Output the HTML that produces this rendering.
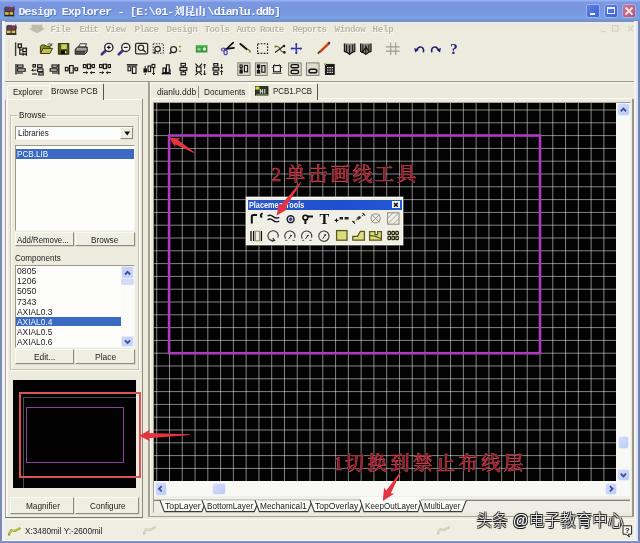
<!DOCTYPE html>
<html><head><meta charset="utf-8"><title>Design Explorer</title>
<style>
html,body{margin:0;padding:0;background:#ebeadd;}
#w{position:relative;width:640px;height:543px;overflow:hidden;background:#ebeadd;}
#w>*{filter:blur(0.45px);}
#w>.nb{filter:blur(0.22px);}
#w div,#w span,#w svg{position:absolute;}
#w div{box-sizing:border-box;}
.t{white-space:nowrap;}
.btn{background:#efeee3;border:1px solid;border-color:#fbfbf6 #8e8d80 #8e8d80 #fbfbf6;box-shadow:0.5px 0.5px 0 #c9c8ba;}
.sunk{background:#fdfdfb;border:1px solid;border-color:#9a998c #f6f6f0 #f6f6f0 #9a998c;}
</style></head><body><div id="w">
<div style="left:0.00px;top:0.00px;width:640.00px;height:21.60px;background:linear-gradient(to bottom,#9ab6f8 0,#8ea9ee 1.2px,#7996de 2.6px,#7896de 9px,#7a9ae2 14px,#76a0e5 16.5px,#76a0e5 19px,#7a90bc 20.2px,#7d92ba 21.6px);"></div>
<div style="left:0.00px;top:21.60px;width:640.00px;height:2.00px;background:#e6ecf1;"></div>
<div style="left:0.00px;top:23.60px;width:640.00px;height:14.40px;background:linear-gradient(to bottom,#ece9da,#eeecdf);"></div>
<div style="left:0.00px;top:21.00px;width:1.70px;height:522.00px;background:#7b8bb4;"></div>
<div style="left:1.70px;top:21.00px;width:3.30px;height:522.00px;background:#eef1fa;"></div>
<div style="left:637.80px;top:21.00px;width:2.20px;height:522.00px;background:#7484ae;"></div>
<div style="left:636.40px;top:21.00px;width:1.40px;height:520.00px;background:#dbe5f9;"></div>
<div style="left:634.00px;top:21.00px;width:2.40px;height:520.00px;background:#f5f3eb;"></div>
<div style="left:0.00px;top:541.00px;width:640.00px;height:2.00px;background:linear-gradient(to bottom,#8c9cd0,#7686be);"></div>
<div style="left:1.70px;top:539.80px;width:636.10px;height:1.20px;background:#f6f7fb;"></div>
<div style="left:585.60px;top:3.60px;width:14.40px;height:14.60px;background:linear-gradient(135deg,#5c80e2,#3f63d2);border-radius:2.5px;border:1px solid #9fb3ee;"><div style="left:3.2px;top:8.2px;width:5px;height:2.2px;background:#f4f6ff"></div></div>
<div style="left:603.70px;top:3.60px;width:13.90px;height:14.60px;background:linear-gradient(135deg,#5c80e2,#3f63d2);border-radius:2.5px;border:1px solid #9fb3ee;"><div style="left:2.6px;top:2.4px;width:7.6px;height:7.4px;border:1.2px solid #e8eeff;border-top-width:2.4px"></div></div>
<div style="left:621.90px;top:3.60px;width:14.10px;height:14.60px;background:linear-gradient(135deg,#cf7a90,#b8526e);border-radius:2.5px;border:1px solid #9fb3ee;"><svg width="12" height="12" style="left:0;top:0.2px" viewBox="0 0 12 12"><path d="M2.6 2.6 L9.4 9.6 M9.4 2.6 L2.6 9.6" stroke="#fbeef2" stroke-width="1.9" fill="none"/></svg></div>
<svg style="left:4px;top:6.2px" width="11" height="10.8" viewBox="0 0 11 11"><rect x="0.3" y="1.5" width="10" height="8.8" fill="#3a2e3a"/><rect x="1.2" y="0.6" width="4.6" height="4.8" fill="#5e3e66"/><rect x="5.6" y="1.2" width="3.8" height="4.2" fill="#7c3c3c"/><rect x="1" y="6.3" width="3.6" height="2.6" fill="#d8c038"/><rect x="5.6" y="6.3" width="3.6" height="2.6" fill="#d8c038"/><rect x="0.3" y="9.3" width="10" height="1.2" fill="#2a2420"/><path d="M9.6 0 L10.6 4.5" stroke="#3040a0" stroke-width="0.9"/></svg>
<svg style="left:5.5px;top:23.6px" width="11" height="11.6" viewBox="0 0 11 11"><rect x="0.3" y="1.5" width="10" height="8.8" fill="#3a2e3a"/><rect x="1.2" y="0.6" width="4.6" height="4.8" fill="#5e3e66"/><rect x="5.6" y="1.2" width="3.8" height="4.2" fill="#7c3c3c"/><rect x="1" y="6.3" width="3.6" height="2.6" fill="#d8c038"/><rect x="5.6" y="6.3" width="3.6" height="2.6" fill="#d8c038"/><rect x="0.3" y="9.3" width="10" height="1.2" fill="#2a2420"/><path d="M9.6 0 L10.6 4.5" stroke="#3040a0" stroke-width="0.9"/></svg>
<svg style="left:27px;top:23.5px" width="20" height="10" viewBox="0 0 20 10"><path d="M4.5 0.8 H15.5 V4.6 H18.6 L10 9.2 L1.4 4.6 H4.5 Z" fill="#bdbcae"/></svg>
<span class="t" style="left:18.40px;top:4.60px;font-family:'Liberation Mono','Noto Sans Mono CJK SC',monospace;font-size:11.6px;line-height:14px;font-weight:bold;color:#f3f6ff;letter-spacing:-0.751px;text-shadow:0.6px 0.6px 0.5px rgba(60,80,150,.55);">Design Explorer - [E:\01-</span>
<span class="t" style="left:174.2px;top:4.6px;font-family:'Liberation Mono','Noto Serif CJK SC',serif;font-size:10.4px;line-height:14px;font-weight:900;color:#fbfcff;letter-spacing:0.1px;text-shadow:0.6px 0.6px 0.5px rgba(60,80,150,.55);">刘昆山</span>
<span class="t" style="left:207.60px;top:4.60px;font-family:'Liberation Mono','Noto Sans Mono CJK SC',monospace;font-size:11.6px;line-height:14px;font-weight:bold;color:#fbfcff;letter-spacing:-0.911px;text-shadow:0.6px 0.6px 0.5px rgba(60,80,150,.55);">\dianlu.ddb]</span>
<span class="t" style="left:50.60px;top:22.60px;font-family:'Liberation Mono','Noto Sans Mono CJK SC',monospace;font-size:9.2px;line-height:14px;font-weight:bold;color:#b9b8ab;letter-spacing:-0.571px;text-shadow:0.7px 0.7px 0 #fbfbf6;">File</span>
<span class="t" style="left:79.60px;top:22.60px;font-family:'Liberation Mono','Noto Sans Mono CJK SC',monospace;font-size:9.2px;line-height:14px;font-weight:bold;color:#b9b8ab;letter-spacing:-0.946px;text-shadow:0.7px 0.7px 0 #fbfbf6;">Edit</span>
<span class="t" style="left:105.60px;top:22.60px;font-family:'Liberation Mono','Noto Sans Mono CJK SC',monospace;font-size:9.2px;line-height:14px;font-weight:bold;color:#b9b8ab;letter-spacing:-0.571px;text-shadow:0.7px 0.7px 0 #fbfbf6;">View</span>
<span class="t" style="left:134.60px;top:22.60px;font-family:'Liberation Mono','Noto Sans Mono CJK SC',monospace;font-size:9.2px;line-height:14px;font-weight:bold;color:#b9b8ab;letter-spacing:-0.761px;text-shadow:0.7px 0.7px 0 #fbfbf6;">Place</span>
<span class="t" style="left:166.60px;top:22.60px;font-family:'Liberation Mono','Noto Sans Mono CJK SC',monospace;font-size:9.2px;line-height:14px;font-weight:bold;color:#b9b8ab;letter-spacing:-0.388px;text-shadow:0.7px 0.7px 0 #fbfbf6;">Design</span>
<span class="t" style="left:204.60px;top:22.60px;font-family:'Liberation Mono','Noto Sans Mono CJK SC',monospace;font-size:9.2px;line-height:14px;font-weight:bold;color:#b9b8ab;letter-spacing:-0.561px;text-shadow:0.7px 0.7px 0 #fbfbf6;">Tools</span>
<span class="t" style="left:236.60px;top:22.60px;font-family:'Liberation Mono','Noto Sans Mono CJK SC',monospace;font-size:9.2px;line-height:14px;font-weight:bold;color:#b9b8ab;letter-spacing:-0.841px;text-shadow:0.7px 0.7px 0 #fbfbf6;">Auto Route</span>
<span class="t" style="left:292.60px;top:22.60px;font-family:'Liberation Mono','Noto Sans Mono CJK SC',monospace;font-size:9.2px;line-height:14px;font-weight:bold;color:#b9b8ab;letter-spacing:-0.692px;text-shadow:0.7px 0.7px 0 #fbfbf6;">Reports</span>
<span class="t" style="left:334.60px;top:22.60px;font-family:'Liberation Mono','Noto Sans Mono CJK SC',monospace;font-size:9.2px;line-height:14px;font-weight:bold;color:#b9b8ab;letter-spacing:-0.388px;text-shadow:0.7px 0.7px 0 #fbfbf6;">Window</span>
<span class="t" style="left:372.60px;top:22.60px;font-family:'Liberation Mono','Noto Sans Mono CJK SC',monospace;font-size:9.2px;line-height:14px;font-weight:bold;color:#b9b8ab;letter-spacing:-0.321px;text-shadow:0.7px 0.7px 0 #fbfbf6;">Help</span>
<svg style="left:598px;top:23px" width="38" height="12" viewBox="0 0 38 12"><g stroke="#d4d3c7" stroke-width="1.2" fill="none"><path d="M3 8.6 H8"/><rect x="14.5" y="2.6" width="5.5" height="5.5"/><path d="M30 2.6 L35 8.4 M35 2.6 L30 8.4"/></g></svg>
<div style="left:5.00px;top:38.00px;width:629.00px;height:43.00px;background:#ecebde;"></div>
<div style="left:5.00px;top:80.80px;width:629.00px;height:1.50px;background:#98978a;"></div>
<div style="left:5.00px;top:82.20px;width:629.00px;height:1.00px;background:#f8f8f2;"></div>
<div style="left:7.50px;top:40.00px;width:1.10px;height:18.00px;background:#e0dfd2;"></div>
<div style="left:7.50px;top:61.50px;width:1.10px;height:17.00px;background:#e0dfd2;"></div>
<svg style="left:0;top:0" width="640" height="100" viewBox="0 0 640 100"><path d="M15.6 42.4 V56" stroke="#3a3a3a" stroke-width="1.4" fill="none"/><rect x="18.2" y="44" width="3.2" height="3.6" fill="none" stroke="#1a1a1a" stroke-width="1.3"/><path d="M19.8 47.8 V54.2 H22.6 M19.8 50 H22.6" stroke="#1a1a1a" stroke-width="1.2" fill="none"/><rect x="22.9" y="48.2" width="3.5" height="3.4" fill="none" stroke="#1a1a1a" stroke-width="1.3"/><path d="M23 52.6 V55.8 M26.4 52.6 V55.8 M23 54.2 H26.4" stroke="#1a1a1a" stroke-width="1.2"/><path d="M40.4 53.4 V46.4 L41.6 45 H45 L46 46.2 H50 V48" fill="#8e8e28" stroke="#3c3c10" stroke-width="1"/><path d="M40.6 53.5 L43 48.4 H52.6 L49.8 53.5 Z" fill="#c2c34a" stroke="#3c3c10" stroke-width="1"/><path d="M47.6 44.2 Q50 42.8 51.6 45 M51.8 43.4 V45.4 H49.8" fill="none" stroke="#3c3c10" stroke-width="0.9"/><rect x="58.4" y="43.6" width="10.4" height="10.6" fill="#5a5c14" stroke="#2e2e0a" stroke-width="1"/><rect x="61.2" y="44.2" width="5.6" height="4.8" fill="#c6cf62"/><rect x="60.8" y="50.4" width="5.6" height="3.8" fill="#0c0c0c"/><rect x="65" y="51" width="1.2" height="2.4" fill="#d8d8c8"/><path d="M78.4 47.2 L80.2 43.8 H86.6 L85 47.2 Z" fill="#f4f4ee" stroke="#222" stroke-width="0.9"/><path d="M75.2 49.2 L77.6 47 H87.2 V51.6 L85 54.2 H75.2 Z" fill="#7c7c74" stroke="#1c1c1c" stroke-width="1"/><path d="M75.4 51.6 H85 M76 53 H84.6" stroke="#1c1c1c" stroke-width="0.8"/><path d="M77 49 H86.4" stroke="#d0d0c8" stroke-width="0.9"/><path d="M106.1 50.3 L101.8 54.2" stroke="#45308c" stroke-width="2.7" stroke-linecap="round"/><circle cx="108.8" cy="47.4" r="4.1" fill="#f4f3ec" stroke="#262630" stroke-width="1.35"/><path d="M106.89999999999999 47.4 H110.7 M108.8 45.5 V49.3" stroke="#111" stroke-width="1.1"/><path d="M123.1 50.3 L118.8 54.2" stroke="#45308c" stroke-width="2.7" stroke-linecap="round"/><circle cx="125.8" cy="47.4" r="4.1" fill="#f4f3ec" stroke="#262630" stroke-width="1.35"/><path d="M123.89999999999999 47.4 H127.7" stroke="#111" stroke-width="1.1"/><rect x="135.6" y="43.4" width="12" height="10.4" rx="1.2" fill="#f1f0e6" stroke="#2a2a2a" stroke-width="1.3"/><circle cx="141" cy="47.8" r="2.7" fill="none" stroke="#2a2a2a" stroke-width="1.2"/><path d="M143 49.8 L145.8 52.2" stroke="#2a2a2a" stroke-width="1.5"/><rect x="153.2" y="43.8" width="10.2" height="9.4" fill="none" stroke="#333" stroke-width="1" stroke-dasharray="1.4 1.3"/><circle cx="157.6" cy="49" r="2.7" fill="#f1f0e6" stroke="#2a2a2a" stroke-width="1.2"/><path d="M155.8 51 L153.6 53.4" stroke="#2a2a2a" stroke-width="1.5"/><circle cx="173.6" cy="49.6" r="3" fill="#f1f0e6" stroke="#2a2a2a" stroke-width="1.3"/><path d="M171.4 52 L169.6 53.8" stroke="#2a2a2a" stroke-width="1.6"/><rect x="179" y="45.8" width="2" height="1.6" fill="#8c8c20"/><rect x="179" y="50.4" width="2" height="1.6" fill="#8c8c20"/><rect x="195.8" y="45.3" width="11.6" height="7.2" fill="#2f9a33"/><rect x="195.8" y="45.3" width="11.6" height="1.2" fill="#5cc060"/><circle cx="204.4" cy="49" r="1.8" fill="#d6ecd2"/><path d="M198 47.6 V50.8 M200 47.6 V50.8 M198 49.2 H200" stroke="#d6ecd2" stroke-width="0.8"/><path d="M233.2 42.6 L225.4 50 M234 47.8 L224.6 49.2" stroke="#111" stroke-width="1.7" stroke-linecap="round"/><ellipse cx="223.4" cy="49.6" rx="2" ry="1.5" fill="none" stroke="#5a50b8" stroke-width="1.3"/><ellipse cx="225.6" cy="52.4" rx="1.6" ry="2.2" fill="none" stroke="#5a50b8" stroke-width="1.3"/><path d="M240.4 44 L246.8 49.2" stroke="#111" stroke-width="2" stroke-linecap="round"/><path d="M246.8 49.2 L249.6 50.4 L250.2 52.6" stroke="#77771c" stroke-width="1.4" fill="none"/><rect x="257.6" y="43.8" width="10" height="9.6" fill="none" stroke="#222" stroke-width="1.1" stroke-dasharray="1.8 1.3"/><path d="M274.6 46.8 Q278 45 280 49 T285 52" stroke="#6e6e18" stroke-width="1.2" fill="none"/><path d="M275 52.6 L284.4 45.6" stroke="#222" stroke-width="1.2"/><circle cx="284" cy="46" r="1.3" fill="#222"/><circle cx="284.4" cy="52.4" r="1.3" fill="#222"/><circle cx="275.6" cy="46.6" r="1" fill="#6e6e18"/><path d="M291 48.6 H301.6 M296.3 43.4 V53.8" stroke="#3434b0" stroke-width="1.5"/><path d="M296.3 42.8 L294.9 44.8 H297.7 Z M296.3 54.4 L294.9 52.4 H297.7 Z M290.4 48.6 L292.4 47.2 V50 Z M302.2 48.6 L300.2 47.2 V50 Z" fill="#3434b0"/><path d="M329.4 42.8 L319.6 52" stroke="#c8402c" stroke-width="2.6"/><path d="M328.2 42.2 L319 50.8" stroke="#e8c84a" stroke-width="1"/><path d="M320 51.4 L317.8 53.6" stroke="#4a3a20" stroke-width="1.6"/><path d="M329.8 42.2 L328.4 43.6" stroke="#6a2a5a" stroke-width="2.2"/><path d="M344.4 43.4 V51.4 Q347.0 52 349.59999999999997 54.4 Q352.2 52 354.79999999999995 51.4 V43.4" fill="#8a8a84" stroke="#151515" stroke-width="1.2"/><path d="M346.59999999999997 44.6 V51.6 M349.59999999999997 45.2 V54 M352.59999999999997 44.6 V51.6" stroke="#151515" stroke-width="1"/><path d="M360.6 43.4 V51.4 Q363.20000000000005 52 365.8 54.4 Q368.40000000000003 52 371.0 51.4 V43.4" fill="#8a8a84" stroke="#151515" stroke-width="1.2"/><path d="M362.8 44.6 V51.6 M365.8 45.2 V54 M368.8 44.6 V51.6" stroke="#151515" stroke-width="1"/><path d="M361.6 52.8 L366 47.4 L368.6 50.8" stroke="#151515" stroke-width="1.3" fill="none"/><path d="M390.7 42.6 V55 M395.7 42.6 V55 M385.8 46.9 H399.6 M385.8 51.1 H399.6" stroke="#9c9c92" stroke-width="1.1"/><path d="M416.4 50.4 Q418.4 46 422 47.4 Q424.2 48.6 423.4 52.4" stroke="#20206a" stroke-width="1.5" fill="none"/><path d="M414.2 48 L418.8 49.8 L415.2 52.6 Z" fill="#20206a"/><path d="M438.8 50.4 Q436.8 46 433.2 47.4 Q431 48.6 431.8 52.4" stroke="#20206a" stroke-width="1.5" fill="none"/><path d="M441 48 L436.4 49.8 L440 52.6 Z" fill="#20206a"/><text x="450" y="54.4" font-family="Liberation Serif,serif" font-weight="bold" font-size="15.5" fill="#1c1c7c">?</text><path d="M16 64 V74.4" stroke="#141414" stroke-width="1.3" fill="none"/><rect x="17.6" y="65" width="5.4" height="2.2" fill="none" stroke="#141414" stroke-width="1.12"/><rect x="17.6" y="68.8" width="7.6" height="2.4" fill="none" stroke="#141414" stroke-width="1.12"/><path d="M17 73 H23" stroke="#141414" stroke-width="1.12" fill="none"/><rect x="33" y="64.6" width="2.4" height="2.4" fill="none" stroke="#141414" stroke-width="1.12"/><rect x="37.6" y="64.8" width="4.4" height="2.6" fill="none" stroke="#141414" stroke-width="1.12"/><rect x="37.6" y="69" width="5.4" height="2.6" fill="none" stroke="#141414" stroke-width="1.12"/><rect x="38.8" y="72.8" width="4.4" height="2.2" fill="none" stroke="#141414" stroke-width="1.12"/><path d="M32 70.2 H36.6 M33.2 68.8 L31.8 70.2 L33.2 71.6" stroke="#141414" stroke-width="1" fill="none"/><path d="M32 74 H37" stroke="#141414" stroke-width="1.12" fill="none"/><path d="M58.8 64 V74.4" stroke="#141414" stroke-width="1.3" fill="none"/><rect x="52" y="65" width="5.2" height="2.2" fill="none" stroke="#141414" stroke-width="1.12"/><rect x="50.2" y="68.8" width="7" height="2.4" fill="none" stroke="#141414" stroke-width="1.12"/><path d="M52 73 H58" stroke="#141414" stroke-width="1.12" fill="none"/><rect x="65.4" y="67.4" width="2.6" height="3.4" fill="none" stroke="#141414" stroke-width="1.12"/><rect x="69.6" y="65.6" width="3.6" height="7.4" fill="none" stroke="#141414" stroke-width="1.12"/><rect x="75" y="67.8" width="2.6" height="2.8" fill="none" stroke="#141414" stroke-width="1.12"/><path d="M68 69 H69.6 M73.4 69 H75" stroke="#141414" stroke-width="1.12" fill="none"/><rect x="83.4" y="64.6" width="2.6" height="3" fill="none" stroke="#141414" stroke-width="1.12"/><rect x="87.4" y="64.2" width="3" height="4.4" fill="none" stroke="#141414" stroke-width="1.12"/><rect x="92" y="64.6" width="2.4" height="3" fill="none" stroke="#141414" stroke-width="1.12"/><path d="M83 72.6 H87.4 M90.4 72.6 H95 M86.2 71.4 L87.6 72.6 L86.2 73.8 M91.8 71.4 L90.4 72.6 L91.8 73.8" stroke="#141414" stroke-width="1" fill="none"/><path d="M86.2 66 H87.4 M90.6 66 H92" stroke="#141414" stroke-width="1.12" fill="none"/><rect x="99.6" y="64.6" width="2.6" height="3" fill="none" stroke="#141414" stroke-width="1.12"/><rect x="103.4" y="64.2" width="3" height="4.4" fill="none" stroke="#141414" stroke-width="1.12"/><rect x="108" y="64.6" width="2.4" height="3" fill="none" stroke="#141414" stroke-width="1.12"/><path d="M99.4 72.6 H103.6 M106.4 72.6 H111 M102.2 71.4 L103.6 72.6 L102.2 73.8 M107.8 71.4 L106.4 72.6 L107.8 73.8" stroke="#141414" stroke-width="1" fill="none"/><path d="M126.8 64.9 H137.4" stroke="#141414" stroke-width="1.5" fill="none"/><rect x="128" y="66.8" width="2.8" height="4" fill="none" stroke="#141414" stroke-width="1.12"/><rect x="132.4" y="66.8" width="3.6" height="6.6" fill="none" stroke="#141414" stroke-width="1.12"/><rect x="144" y="69" width="2.4" height="3" fill="#1a1a1a" stroke="#141414" stroke-width="1.12"/><rect x="148" y="66" width="2.6" height="5.6" fill="none" stroke="#141414" stroke-width="1.12"/><rect x="152" y="64.4" width="2.8" height="3.2" fill="none" stroke="#141414" stroke-width="1.12"/><path d="M145.2 73.6 V75 M153.6 68 V74.4 M152.4 73 L153.6 74.6 L154.8 73 M145.2 66 V69" stroke="#141414" stroke-width="1" fill="none"/><path d="M161.6 73.6 H171" stroke="#141414" stroke-width="1.5" fill="none"/><rect x="163" y="68" width="2.6" height="4.6" fill="none" stroke="#141414" stroke-width="1.12"/><rect x="166.4" y="64.8" width="2.8" height="7.8" fill="none" stroke="#141414" stroke-width="1.12"/><path d="M170 69 V72.4" stroke="#141414" stroke-width="1.12" fill="none"/><rect x="181" y="63.4" width="4.4" height="2.6" fill="none" stroke="#141414" stroke-width="1.12"/><rect x="180" y="67.6" width="6.8" height="2.8" fill="none" stroke="#141414" stroke-width="1.12"/><rect x="181" y="72" width="4.6" height="2.8" fill="none" stroke="#141414" stroke-width="1.12"/><path d="M183.4 66 V67.6 M183.4 70.4 V72" stroke="#141414" stroke-width="1.12" fill="none"/><path d="M195.4 63.6 L198.2 66.6 M202 63.6 L199.4 66.6 M195.4 75.2 L198.2 72.4 M202 75.2 L199.4 72.4" stroke="#141414" stroke-width="1.12" fill="none"/><rect x="196.4" y="67" width="4.6" height="4.8" fill="none" stroke="#141414" stroke-width="1.12"/><path d="M204.6 64 V68.6 M204.6 70.4 V75 M203.4 65.4 L204.6 64 L205.8 65.4 M203.4 73.6 L204.6 75 L205.8 73.6" stroke="#141414" stroke-width="1" fill="none"/><rect x="213.8" y="63.6" width="4" height="2.4" fill="none" stroke="#141414" stroke-width="1.12"/><rect x="213" y="67.6" width="5.8" height="2.6" fill="none" stroke="#141414" stroke-width="1.12"/><rect x="213.8" y="72" width="4.2" height="2.6" fill="none" stroke="#141414" stroke-width="1.12"/><path d="M221.6 64 V68.6 M221.6 70.4 V75 M220.4 67.2 L221.6 68.6 L222.8 67.2 M220.4 71.8 L221.6 70.4 L222.8 71.8" stroke="#141414" stroke-width="1" fill="none"/><rect x="237.8" y="62.9" width="12.199999999999989" height="12.5" fill="#dddccf" stroke="#77766a" stroke-width="0.9"/><rect x="240" y="65" width="2.2" height="2.4" fill="none" stroke="#141414" stroke-width="1.12"/><rect x="240" y="70.6" width="2.2" height="2.4" fill="#1a1a1a" stroke="#141414" stroke-width="1.12"/><rect x="244.4" y="65.4" width="3.2" height="6.4" fill="none" stroke="#141414" stroke-width="1.12"/><path d="M239.6 69 H243 M241 67.6 V70.4" stroke="#141414" stroke-width="0.9" fill="none"/><rect x="255.4" y="62.9" width="11.799999999999983" height="12.5" fill="#dddccf" stroke="#77766a" stroke-width="0.9"/><rect x="257.4" y="65" width="2.2" height="2.6" fill="#1a1a1a" stroke="#141414" stroke-width="1.12"/><rect x="257.4" y="70.4" width="2.2" height="2.6" fill="#1a1a1a" stroke="#141414" stroke-width="1.12"/><rect x="261.8" y="65.6" width="3.2" height="6.6" fill="none" stroke="#141414" stroke-width="1.12"/><path d="M258.6 67.6 V70.4" stroke="#141414" stroke-width="0.9" fill="none"/><rect x="273.6" y="65.6" width="6.8" height="6.2" fill="#f6f6f0" stroke="#141414" stroke-width="1.12"/><path d="M271.8 67.4 H273.6 M280.4 67.4 H282.4 M274.6 64 V65.6 M279.4 64 V65.6 M272.4 73.4 H282" stroke="#555" stroke-width="1" fill="none"/><rect x="288.6" y="62.9" width="12.599999999999966" height="12.5" fill="#dddccf" stroke="#77766a" stroke-width="0.9"/><rect x="291" y="64.6" width="7.6" height="3.2" rx="1.6" fill="none" stroke="#151515" stroke-width="1.4"/><rect x="291" y="70.2" width="7.6" height="3.4" rx="1.7" fill="none" stroke="#151515" stroke-width="1.4"/><rect x="306.4" y="62.9" width="12.600000000000023" height="12.5" fill="#dddccf" stroke="#77766a" stroke-width="0.9"/><rect x="309" y="69.2" width="7.8" height="3.6" rx="1.8" fill="none" stroke="#151515" stroke-width="1.5"/><rect x="325.4" y="64.4" width="8.8" height="10" fill="#1a1a1a" stroke="#1a1a1a" stroke-width="1"/><path d="M327 67.6 H333 M327 70 H333 M327 72.4 H333" stroke="#e8e8e0" stroke-width="1.2" stroke-dasharray="1.6 0.7"/><path d="M323.8 63 L326.2 65.4 M326 62.8 L324 65.4" stroke="#c0b030" stroke-width="0.9"/></svg>
<div style="left:5.00px;top:98.50px;width:138.00px;height:419.10px;border:1px solid;border-color:#fbfbf6 #77766a #77766a #a9a39b;background:#ecebde;"></div>
<div style="left:6.00px;top:99.50px;width:2.00px;height:416.90px;background:#fbf8f1;"></div>
<div style="left:141.60px;top:98.50px;width:1.40px;height:418.90px;background:#8b8a7d;"></div>
<div style="left:7.00px;top:85.00px;width:42.50px;height:14.00px;border:1px solid;border-color:#fbfbf6 #9d9c8e transparent #fbfbf6;border-bottom:none;border-radius:2px 2px 0 0;background:#ecebde;"></div>
<div style="left:48.50px;top:83.40px;width:55.10px;height:16.20px;border:1px solid;border-color:#fbfbf6 #55544a transparent #fbfbf6;border-bottom:none;border-radius:2px 2px 0 0;background:#ecebde;border-right-width:1.2px;"></div>
<span id="t0" class="t" style="left:13.00px;top:86.00px;font-size:9.2px;line-height:12px;color:#1c1c1c;font-weight:normal;font-family:'Liberation Sans',sans-serif;transform:scaleX(0.8679);transform-origin:0 50%;">Explorer</span>
<span id="t1" class="t" style="left:51.00px;top:84.60px;font-size:9.2px;line-height:12px;color:#1c1c1c;font-weight:normal;font-family:'Liberation Sans',sans-serif;transform:scaleX(0.8965);transform-origin:0 50%;">Browse PCB</span>
<div style="left:10.00px;top:115.00px;width:129.00px;height:255.00px;border:1px solid #c3c2b3;box-shadow:1px 1px 0 #fbfbf6, inset 1px 1px 0 #fbfbf6;"></div>
<div style="left:16.50px;top:109.00px;width:30.50px;height:12.00px;background:#ecebde;"></div>
<span id="t2" class="t" style="left:18.75px;top:109.00px;font-size:9.2px;line-height:12px;color:#1c1c1c;font-weight:normal;font-family:'Liberation Sans',sans-serif;transform:scaleX(0.8796);transform-origin:0 50%;">Browse</span>
<div class="sunk" style="left:14.50px;top:126.00px;width:119.50px;height:14.40px;"></div>
<span id="t3" class="t" style="left:17.50px;top:127.20px;font-size:9.2px;line-height:12px;color:#1c1c1c;font-weight:normal;font-family:'Liberation Sans',sans-serif;transform:scaleX(0.8713);transform-origin:0 50%;">Libraries</span>
<div class="btn" style="left:120.40px;top:127.20px;width:12.60px;height:12.00px;"><svg width="12" height="12" style="left:0;top:0" viewBox="0 0 12 12"><path d="M3.2 3.6 H9.2 L6.2 7.4 Z" fill="#111"/></svg></div>
<div class="sunk" style="left:14.50px;top:145.00px;width:120.90px;height:86.40px;"></div>
<div style="left:16.00px;top:148.80px;width:118.00px;height:10.00px;background:#3a6ac4;"></div>
<span id="t4" class="t" style="left:17.00px;top:147.80px;font-size:9.2px;line-height:12px;color:#f4f6ff;font-weight:normal;font-family:'Liberation Sans',sans-serif;transform:scaleX(0.8855);transform-origin:0 50%;">PCB.LIB</span>
<div class="btn" style="left:14.50px;top:232.00px;width:59.50px;height:14.40px;"></div>
<div class="btn" style="left:75.00px;top:232.00px;width:60.40px;height:14.40px;"></div>
<span id="t5" class="t" style="left:17.00px;top:233.50px;font-size:9.2px;line-height:12px;color:#1c1c1c;font-weight:normal;font-family:'Liberation Sans',sans-serif;transform:scaleX(0.8506);transform-origin:0 50%;">Add/Remove...</span>
<span id="t6" class="t" style="left:91.00px;top:233.50px;font-size:9.2px;line-height:12px;color:#1c1c1c;font-weight:normal;font-family:'Liberation Sans',sans-serif;transform:scaleX(0.8877);transform-origin:0 50%;">Browse</span>
<span id="t7" class="t" style="left:15.00px;top:251.50px;font-size:9.2px;line-height:12px;color:#1c1c1c;font-weight:normal;font-family:'Liberation Sans',sans-serif;transform:scaleX(0.8773);transform-origin:0 50%;">Components</span>
<div class="sunk" style="left:14.50px;top:264.50px;width:120.90px;height:83.30px;"></div>
<div style="left:15.60px;top:316.70px;width:105.00px;height:9.70px;background:#3a6ac4;"></div>
<span id="t8" class="t" style="left:17.40px;top:265.20px;font-size:9.2px;line-height:12px;color:#1c1c1c;font-weight:normal;font-family:'Liberation Sans',sans-serif;transform:scaleX(0.9436);transform-origin:0 50%;">0805</span>
<span id="t9" class="t" style="left:17.40px;top:275.30px;font-size:9.2px;line-height:12px;color:#1c1c1c;font-weight:normal;font-family:'Liberation Sans',sans-serif;transform:scaleX(0.9436);transform-origin:0 50%;">1206</span>
<span id="t10" class="t" style="left:17.40px;top:285.40px;font-size:9.2px;line-height:12px;color:#1c1c1c;font-weight:normal;font-family:'Liberation Sans',sans-serif;transform:scaleX(0.9436);transform-origin:0 50%;">5050</span>
<span id="t11" class="t" style="left:17.40px;top:295.50px;font-size:9.2px;line-height:12px;color:#1c1c1c;font-weight:normal;font-family:'Liberation Sans',sans-serif;transform:scaleX(0.9436);transform-origin:0 50%;">7343</span>
<span id="t12" class="t" style="left:17.40px;top:305.60px;font-size:9.2px;line-height:12px;color:#1c1c1c;font-weight:normal;font-family:'Liberation Sans',sans-serif;transform:scaleX(0.9091);transform-origin:0 50%;">AXIAL0.3</span>
<span id="t13" class="t" style="left:17.40px;top:315.70px;font-size:9.2px;line-height:12px;color:#f4f6ff;font-weight:normal;font-family:'Liberation Sans',sans-serif;transform:scaleX(0.9091);transform-origin:0 50%;">AXIAL0.4</span>
<span id="t14" class="t" style="left:17.40px;top:325.80px;font-size:9.2px;line-height:12px;color:#1c1c1c;font-weight:normal;font-family:'Liberation Sans',sans-serif;transform:scaleX(0.9091);transform-origin:0 50%;">AXIAL0.5</span>
<span id="t15" class="t" style="left:17.40px;top:335.90px;font-size:9.2px;line-height:12px;color:#1c1c1c;font-weight:normal;font-family:'Liberation Sans',sans-serif;transform:scaleX(0.9091);transform-origin:0 50%;">AXIAL0.6</span>
<div style="left:121.00px;top:265.60px;width:13.20px;height:81.20px;background:#fbfbf9;"></div>
<div style="left:121.40px;top:266.00px;width:12.60px;height:12.60px;background:#c9d3f7;border:1px solid #e6ebfd;border-radius:2px;"></div>
<div style="left:121.40px;top:278.60px;width:12.60px;height:6.80px;background:#d3dbf8;border-radius:0 0 2px 2px;"></div>
<div style="left:121.40px;top:335.60px;width:12.60px;height:11.00px;background:#c9d3f7;border:1px solid #e6ebfd;border-radius:2px;"></div>
<svg style="left:0;top:0" width="640" height="543" viewBox="0 0 640 543"><path d="M125.0 274.5 L127.6 271.9 L130.2 274.5" stroke="#3a4f9e" stroke-width="1.9" fill="none"/><path d="M125.0 340.3 L127.6 342.90000000000003 L130.2 340.3" stroke="#3a4f9e" stroke-width="1.9" fill="none"/></svg>
<div class="btn" style="left:14.50px;top:348.80px;width:59.50px;height:15.20px;"></div>
<div class="btn" style="left:75.00px;top:348.80px;width:60.40px;height:15.20px;"></div>
<span id="t16" class="t" style="left:33.75px;top:351.00px;font-size:9.2px;line-height:12px;color:#1c1c1c;font-weight:normal;font-family:'Liberation Sans',sans-serif;transform:scaleX(0.9128);transform-origin:0 50%;">Edit...</span>
<span id="t17" class="t" style="left:94.50px;top:351.00px;font-size:9.2px;line-height:12px;color:#1c1c1c;font-weight:normal;font-family:'Liberation Sans',sans-serif;transform:scaleX(0.9224);transform-origin:0 50%;">Place</span>
<div style="left:13.00px;top:379.50px;width:123.30px;height:108.50px;background:#030202;"></div>
<div style="left:23.00px;top:397.00px;width:113.30px;height:91.00px;border:1px solid #4e4e4e;border-right:none;border-bottom:none;"></div>
<div style="left:26.00px;top:406.60px;width:98.20px;height:56.00px;border:1.1px solid #8d3f9c;"></div>
<div style="left:18.60px;top:391.60px;width:122.60px;height:86.20px;border:2px solid #de5054;"></div>
<div class="btn" style="left:9.50px;top:497.40px;width:64.50px;height:16.60px;"></div>
<div class="btn" style="left:74.60px;top:497.40px;width:64.40px;height:16.60px;"></div>
<span id="t18" class="t" style="left:26.25px;top:500.00px;font-size:9.2px;line-height:12px;color:#1c1c1c;font-weight:normal;font-family:'Liberation Sans',sans-serif;transform:scaleX(0.8982);transform-origin:0 50%;">Magnifier</span>
<span id="t19" class="t" style="left:89.50px;top:500.00px;font-size:9.2px;line-height:12px;color:#1c1c1c;font-weight:normal;font-family:'Liberation Sans',sans-serif;transform:scaleX(0.8897);transform-origin:0 50%;">Configure</span>
<div style="left:5.00px;top:518.60px;width:629.00px;height:21.20px;background:#efeee3;"></div>
<div style="left:5.00px;top:518.60px;width:629.00px;height:1.20px;background:#f9f9f4;"></div>
<span id="t20" class="t" style="left:24.50px;top:525.20px;font-size:9.6px;line-height:12px;color:#1c1c1c;font-weight:normal;font-family:'Liberation Sans',sans-serif;transform:scaleX(0.8559);transform-origin:0 50%;">X:3480mil Y:-2600mil</span>
<svg style="left:8.4px;top:526.6px" width="13" height="9" viewBox="0 0 13 9"><path d="M0.8 7.6 L3.2 3.2 L6.6 4 L11.6 1.4" fill="none" stroke="#9a9c2c" stroke-width="2.2" stroke-linejoin="round" stroke-linecap="round"/><path d="M1.2 7 L3.4 3.2 L6.6 3.8 L11.2 1.4" fill="none" stroke="#dcdc58" stroke-width="0.9" stroke-linejoin="round"/></svg>
<svg style="left:143.4px;top:526.4px" width="13" height="9" viewBox="0 0 13 9"><path d="M0.8 7.6 L3.2 3.2 L6.6 4 L11.6 1.4" fill="none" stroke="#c6c5b6" stroke-width="2.2" stroke-linejoin="round" stroke-linecap="round"/><path d="M1.2 7 L3.4 3.2 L6.6 3.8 L11.2 1.4" fill="none" stroke="#e2e1d4" stroke-width="0.9" stroke-linejoin="round"/></svg>
<svg style="left:437.4px;top:526.4px" width="13" height="9" viewBox="0 0 13 9"><path d="M0.8 7.6 L3.2 3.2 L6.6 4 L11.6 1.4" fill="none" stroke="#c6c5b6" stroke-width="2.2" stroke-linejoin="round" stroke-linecap="round"/><path d="M1.2 7 L3.4 3.2 L6.6 3.8 L11.2 1.4" fill="none" stroke="#e2e1d4" stroke-width="0.9" stroke-linejoin="round"/></svg>
<div style="left:148.40px;top:82.20px;width:1.20px;height:435.20px;background:#a3a293;"></div>
<div style="left:149.60px;top:83.20px;width:1.00px;height:433.80px;background:#f8f8f2;"></div>
<div style="left:632.00px;top:98.50px;width:1.90px;height:418.90px;background:#979689;"></div>
<div style="left:148.40px;top:516.20px;width:484.80px;height:1.20px;background:#a3a293;"></div>
<div style="left:150.60px;top:98.20px;width:481.40px;height:1.20px;background:#fbfbf6;"></div>
<div style="left:198.20px;top:86.00px;width:1.10px;height:12.00px;background:#8f8e80;"></div>
<div style="left:248.60px;top:83.00px;width:69.40px;height:16.80px;border:1px solid;border-color:#fbfbf6 #55544a transparent #fbfbf6;border-bottom:none;border-radius:2px 2px 0 0;background:#ecebde;border-right-width:1.2px;"></div>
<span id="t21" class="t" style="left:157.20px;top:85.60px;font-size:9.2px;line-height:12px;color:#1c1c1c;font-weight:normal;font-family:'Liberation Sans',sans-serif;transform:scaleX(0.9220);transform-origin:0 50%;">dianlu.ddb</span>
<span id="t22" class="t" style="left:204.00px;top:86.00px;font-size:9.2px;line-height:12px;color:#1c1c1c;font-weight:normal;font-family:'Liberation Sans',sans-serif;transform:scaleX(0.8909);transform-origin:0 50%;">Documents</span>
<span id="t23" class="t" style="left:272.80px;top:84.80px;font-size:9.2px;line-height:12px;color:#1c1c1c;font-weight:normal;font-family:'Liberation Sans',sans-serif;transform:scaleX(0.8613);transform-origin:0 50%;">PCB1.PCB</span>
<svg style="left:254.6px;top:85.6px" width="14" height="10" viewBox="0 0 14 10"><rect x="0.4" y="0.6" width="12.6" height="8.6" fill="#2a3a22" stroke="#10140c" stroke-width="0.8"/><rect x="0.4" y="0.6" width="4" height="3" fill="#d8d840"/><path d="M5.4 3 V7.6 M7.6 3 V7.6 M9.8 3 V7.6 M5.4 5.2 H7.6" stroke="#e4e8dc" stroke-width="1"/><path d="M1 9 H13" stroke="#c8c8b0" stroke-width="0.8"/></svg>
<div style="left:152.80px;top:101.80px;width:478.60px;height:411.60px;border:1px solid;border-color:#a3a293 #f4f4ee #ecebdf #a3a293;background:#efeee5;"></div>
<svg class="nb" style="left:154px;top:103px;background:#030303" width="462.30" height="378.30" viewBox="0 0 462.30 378.30"><g fill="#ffffff" fill-opacity="0.5"><rect x="2.20" y="0" width="1" height="378.30"/><rect x="14.98" y="0" width="1" height="378.30"/><rect x="27.75" y="0" width="1" height="378.30"/><rect x="40.53" y="0" width="1" height="378.30"/><rect x="53.31" y="0" width="1" height="378.30"/><rect x="66.08" y="0" width="1" height="378.30"/><rect x="78.86" y="0" width="1" height="378.30"/><rect x="91.64" y="0" width="1" height="378.30"/><rect x="104.42" y="0" width="1" height="378.30"/><rect x="117.19" y="0" width="1" height="378.30"/><rect x="129.97" y="0" width="1" height="378.30"/><rect x="142.75" y="0" width="1" height="378.30"/><rect x="155.52" y="0" width="1" height="378.30"/><rect x="168.30" y="0" width="1" height="378.30"/><rect x="181.08" y="0" width="1" height="378.30"/><rect x="193.86" y="0" width="1" height="378.30"/><rect x="206.63" y="0" width="1" height="378.30"/><rect x="219.41" y="0" width="1" height="378.30"/><rect x="232.19" y="0" width="1" height="378.30"/><rect x="244.96" y="0" width="1" height="378.30"/><rect x="257.74" y="0" width="1" height="378.30"/><rect x="270.52" y="0" width="1" height="378.30"/><rect x="283.29" y="0" width="1" height="378.30"/><rect x="296.07" y="0" width="1" height="378.30"/><rect x="308.85" y="0" width="1" height="378.30"/><rect x="321.62" y="0" width="1" height="378.30"/><rect x="334.40" y="0" width="1" height="378.30"/><rect x="347.18" y="0" width="1" height="378.30"/><rect x="359.96" y="0" width="1" height="378.30"/><rect x="372.73" y="0" width="1" height="378.30"/><rect x="385.51" y="0" width="1" height="378.30"/><rect x="398.29" y="0" width="1" height="378.30"/><rect x="411.06" y="0" width="1" height="378.30"/><rect x="423.84" y="0" width="1" height="378.30"/><rect x="436.62" y="0" width="1" height="378.30"/><rect x="449.39" y="0" width="1" height="378.30"/><rect x="0" y="6.50" width="462.30" height="1"/><rect x="0" y="19.30" width="462.30" height="1"/><rect x="0" y="32.10" width="462.30" height="1"/><rect x="0" y="44.90" width="462.30" height="1"/><rect x="0" y="57.70" width="462.30" height="1"/><rect x="0" y="70.50" width="462.30" height="1"/><rect x="0" y="83.30" width="462.30" height="1"/><rect x="0" y="96.10" width="462.30" height="1"/><rect x="0" y="108.90" width="462.30" height="1"/><rect x="0" y="121.70" width="462.30" height="1"/><rect x="0" y="134.50" width="462.30" height="1"/><rect x="0" y="147.30" width="462.30" height="1"/><rect x="0" y="160.10" width="462.30" height="1"/><rect x="0" y="172.90" width="462.30" height="1"/><rect x="0" y="185.70" width="462.30" height="1"/><rect x="0" y="198.50" width="462.30" height="1"/><rect x="0" y="211.30" width="462.30" height="1"/><rect x="0" y="224.10" width="462.30" height="1"/><rect x="0" y="236.90" width="462.30" height="1"/><rect x="0" y="249.70" width="462.30" height="1"/><rect x="0" y="262.50" width="462.30" height="1"/><rect x="0" y="275.30" width="462.30" height="1"/><rect x="0" y="288.10" width="462.30" height="1"/><rect x="0" y="300.90" width="462.30" height="1"/><rect x="0" y="313.70" width="462.30" height="1"/><rect x="0" y="326.50" width="462.30" height="1"/><rect x="0" y="339.30" width="462.30" height="1"/><rect x="0" y="352.10" width="462.30" height="1"/><rect x="0" y="364.90" width="462.30" height="1"/></g><rect x="15.10" y="32.50" width="370.90" height="217.70" fill="none" stroke="#ad3abf" stroke-width="2.6"/></svg>
<div style="left:616.30px;top:103.00px;width:13.90px;height:378.30px;background:#f8f8f5;"></div>
<div style="left:154.00px;top:481.30px;width:476.20px;height:15.10px;background:#f8f8f5;"></div>
<div style="left:616.80px;top:103.20px;width:13.20px;height:12.80px;background:linear-gradient(135deg,#d3dcfa,#bfcbf4);border:1px solid #e9edfd;border-radius:2.4px;"></div>
<div style="left:616.80px;top:468.60px;width:13.20px;height:12.40px;background:linear-gradient(135deg,#d3dcfa,#bfcbf4);border:1px solid #e9edfd;border-radius:2.4px;"></div>
<div style="left:618.40px;top:436.40px;width:10.80px;height:12.40px;background:linear-gradient(135deg,#d3dcfa,#bfcbf4);border:1px solid #e9edfd;border-radius:2.4px;"></div>
<div style="left:154.60px;top:482.00px;width:12.40px;height:13.80px;background:linear-gradient(135deg,#d3dcfa,#bfcbf4);border:1px solid #e9edfd;border-radius:2.4px;"></div>
<div style="left:605.20px;top:483.00px;width:11.60px;height:11.60px;background:linear-gradient(135deg,#d3dcfa,#bfcbf4);border:1px solid #e9edfd;border-radius:2.4px;"></div>
<div style="left:212.40px;top:483.40px;width:13.80px;height:11.80px;background:linear-gradient(135deg,#d3dcfa,#bfcbf4);border:1px solid #e9edfd;border-radius:2.4px;"></div>
<svg style="left:0;top:0" width="640" height="543" viewBox="0 0 640 543"><path d="M620.8 111.3 L623.4 108.7 L626.0 111.3" stroke="#3a4f9e" stroke-width="1.9" fill="none"/><path d="M620.8 473.7 L623.4 476.3 L626.0 473.7" stroke="#3a4f9e" stroke-width="1.9" fill="none"/><path d="M161.70000000000002 486.2 L159.1 488.8 L161.70000000000002 491.40000000000003" stroke="#3a4f9e" stroke-width="1.9" fill="none"/><path d="M609.9000000000001 486.2 L612.5 488.8 L609.9000000000001 491.40000000000003" stroke="#3a4f9e" stroke-width="1.9" fill="none"/></svg>
<div style="left:154.00px;top:496.40px;width:476.20px;height:3.60px;background:#f1f0e8;"></div>
<svg style="left:0;top:0" width="640" height="543" viewBox="0 0 640 543"><path d="M154 500.2 H361.5 M419.6 500.2 H630" stroke="#5d5c52" stroke-width="1.1" fill="none"/><path d="M160 500.2 L164.4 511.6 H201.8 L206.4 500.2" fill="#fafaf6" stroke="#3c3c36" stroke-width="1.1"/><path d="M202 500.2 L206.4 511.6 H254.29999999999998 L258.9 500.2" fill="#fafaf6" stroke="#3c3c36" stroke-width="1.1"/><path d="M255 500.2 L259.4 511.6 H307.79999999999995 L312.4 500.2" fill="#fafaf6" stroke="#3c3c36" stroke-width="1.1"/><path d="M310 500.2 L314.4 511.6 H359.29999999999995 L363.9 500.2" fill="#fafaf6" stroke="#3c3c36" stroke-width="1.1"/><path d="M359.5 497 L363.9 511.6 H417.79999999999995 L422.4 497 Z" fill="#fafaf6" stroke="none"/><path d="M360.1 499.6 L363.9 511.6 H417.79999999999995 L421.79999999999995 499.6" fill="none" stroke="#3c3c36" stroke-width="1.1"/><path d="M419.4 500.2 L423.79999999999995 511.6 H461.79999999999995 L466.4 500.2" fill="#fafaf6" stroke="#3c3c36" stroke-width="1.1"/></svg>
<span id="t24" class="t" style="left:165.00px;top:499.60px;font-size:9.4px;line-height:12px;color:#1c1c1c;font-weight:normal;font-family:'Liberation Sans',sans-serif;transform:scaleX(0.9254);transform-origin:0 50%;">TopLayer</span>
<span id="t25" class="t" style="left:207.00px;top:499.60px;font-size:9.4px;line-height:12px;color:#1c1c1c;font-weight:normal;font-family:'Liberation Sans',sans-serif;transform:scaleX(0.8691);transform-origin:0 50%;">BottomLayer</span>
<span id="t26" class="t" style="left:260.00px;top:499.60px;font-size:9.4px;line-height:12px;color:#1c1c1c;font-weight:normal;font-family:'Liberation Sans',sans-serif;transform:scaleX(0.8871);transform-origin:0 50%;">Mechanical1</span>
<span id="t27" class="t" style="left:315.00px;top:499.60px;font-size:9.4px;line-height:12px;color:#1c1c1c;font-weight:normal;font-family:'Liberation Sans',sans-serif;transform:scaleX(0.9110);transform-origin:0 50%;">TopOverlay</span>
<span id="t28" class="t" style="left:364.50px;top:499.60px;font-size:9.4px;line-height:12px;color:#1c1c1c;font-weight:normal;font-family:'Liberation Sans',sans-serif;transform:scaleX(0.8633);transform-origin:0 50%;">KeepOutLayer</span>
<span id="t29" class="t" style="left:424.40px;top:499.60px;font-size:9.4px;line-height:12px;color:#1c1c1c;font-weight:normal;font-family:'Liberation Sans',sans-serif;transform:scaleX(0.8393);transform-origin:0 50%;">MultiLayer</span>
<div style="left:246.00px;top:197.40px;width:157.40px;height:47.20px;background:#f0efe5;border:1px solid #fbfbf6;box-shadow:0 0 0 0.6px #8f8e82;"></div>
<div style="left:247.60px;top:199.80px;width:154.00px;height:9.80px;background:linear-gradient(to right,#2a56c6,#1f4fd0 60%,#2458d6);"></div>
<span id="t30" class="t" style="left:249.20px;top:198.80px;font-size:8.4px;line-height:12px;color:#f6f8ff;font-weight:bold;font-family:'Liberation Sans',sans-serif;transform:scaleX(0.8678);transform-origin:0 50%;">PlacementTools</span>
<div style="left:392.20px;top:200.60px;width:8.00px;height:7.80px;background:#eeede3;border:0.8px solid #fbfbf6;"><svg width="8" height="8" style="left:-0.8px;top:-0.8px" viewBox="0 0 8 8"><path d="M2 2 L5.8 5.8 M5.8 2 L2 5.8" stroke="#111" stroke-width="1.5"/></svg></div>
<svg style="left:0;top:0" width="640" height="543" viewBox="0 0 640 543"><path d="M251.8 223.6 V216.6 Q251.8 215 253.4 215 H257" stroke="#111" stroke-width="2" fill="none"/><path d="M262.6 213.4 Q259.4 214.8 261.8 217.6" stroke="#111" stroke-width="1.9" fill="none"/><path d="M267.6 216 Q270.4 214.2 273.2 216.6 T279.2 217.4 M267.6 219.8 Q270.4 218 273.2 220.4 T279.2 221.2" stroke="#16162a" stroke-width="1.4" fill="none"/><circle cx="290.6" cy="219.2" r="3.4" fill="#f0efe5" stroke="#1c1c1c" stroke-width="1.5"/><circle cx="290.6" cy="219.2" r="1.7" fill="#2c3aa8"/><circle cx="305.4" cy="217.6" r="2.4" fill="none" stroke="#111" stroke-width="1.6"/><path d="M307 216.6 H313 M305.4 219.6 V224" stroke="#111" stroke-width="2"/><text x="319.6" y="223.8" font-family="Liberation Serif,serif" font-weight="bold" font-size="14.6" fill="#0c0c0c">T</text><path d="M334.6 220.4 H338.4 M336.5 218.6 V222.2" stroke="#111" stroke-width="1.1"/><path d="M339.6 217 H343 V219.6 H339.6 Z M344.6 217 H348.6 V219.6 H344.6 Z" fill="#222"/><path d="M353 222.4 L364.6 214" stroke="#555" stroke-width="1" stroke-dasharray="2.2 1.4"/><path d="M352.4 221 L355 223.6 M362.6 213 L365.2 215.6" stroke="#222" stroke-width="1.1"/><rect x="357" y="216.6" width="3.6" height="2.6" fill="#333" transform="rotate(-36 358.8 217.9)"/><circle cx="375.6" cy="218.4" r="4.6" fill="none" stroke="#8a8a80" stroke-width="1"/><path d="M371.4 214.2 L379.8 222.6 M379.8 214.2 L371.4 222.6" stroke="#8a8a80" stroke-width="1"/><rect x="387.6" y="212.8" width="11.4" height="11.4" fill="none" stroke="#8a8a80" stroke-width="1"/><path d="M388 218 L393 213 M388 223.6 L398.6 213.2 M393.4 224 L398.8 218.6" stroke="#a8a89c" stroke-width="1"/><path d="M251 231 V241 M253.6 231 V241 M261.4 231 V241" stroke="#111" stroke-width="1.3"/><rect x="255.4" y="231.2" width="4.2" height="9.6" fill="none" stroke="#8c8c50" stroke-width="0.9"/><path d="M268.59999999999997 238.6 A5.2 5.2 0 1 1 278.0 237.6" stroke="#3a3a3a" stroke-width="1.1" fill="none"/><path d="M271.59999999999997 241.2 L274.59999999999997 240.4 L272.8 238.2" stroke="#222" stroke-width="1.1" fill="none"/><path d="M268.59999999999997 238.6 Q270.2 241 274.2 240.6" stroke="#3a3a3a" stroke-width="1.1" fill="none"/><path d="M285.4 238.79999999999998 A5.2 5.2 0 1 1 294.8 237.79999999999998" stroke="#3a3a3a" stroke-width="1.1" fill="none"/><path d="M288.6 239.0 L291.2 235.39999999999998" stroke="#333" stroke-width="1"/><circle cx="291" cy="235.6" r="0.9" fill="#333"/><path d="M285.2 240.39999999999998 H287.4 M292.6 240.39999999999998 H294.8" stroke="#555" stroke-width="0.9"/><path d="M302.2 238.79999999999998 A5.2 5.2 0 1 1 311.6 237.79999999999998" stroke="#3a3a3a" stroke-width="1.1" fill="none"/><path d="M305.40000000000003 239.0 L308.0 235.39999999999998" stroke="#333" stroke-width="1"/><circle cx="307.8" cy="235.6" r="0.9" fill="#333"/><path d="M302.0 240.39999999999998 H304.2 M309.40000000000003 240.39999999999998 H311.6" stroke="#555" stroke-width="0.9"/><path d="M319.4 238.79999999999998 A5.2 5.2 0 1 1 328.8 237.79999999999998" stroke="#3a3a3a" stroke-width="1.1" fill="none"/><path d="M319.4 238.79999999999998 A5.2 5.2 0 0 0 328.8 237.79999999999998" stroke="#3a3a3a" stroke-width="1.1" fill="none"/><path d="M322.6 238.79999999999998 L325.4 234.79999999999998" stroke="#333" stroke-width="1"/><circle cx="325.2" cy="235.0" r="0.9" fill="#333"/><rect x="336.6" y="230.6" width="10.4" height="9.6" fill="#dcdc84" stroke="#5c5c14" stroke-width="1.3"/><path d="M352.8 240.2 V236.4 H357.4 L360.4 231.4 H364.4 V240.2 Z" fill="#dcdc84" stroke="#5c5c14" stroke-width="1.3"/><path d="M369.6 240.2 V231.6 H375 V234.6 H377.6 V231.6 H381.4 V240.2 Z" fill="#dcdc84" stroke="#5c5c14" stroke-width="1.3"/><path d="M370 235.6 Q375 235.4 381 238.6" stroke="#5c5c14" stroke-width="1.1" fill="none"/><rect x="388.0" y="231.4" width="2.5" height="3.3" rx="0.8" fill="none" stroke="#26260c" stroke-width="1.25"/><rect x="388.0" y="236.4" width="2.5" height="3.3" rx="0.8" fill="none" stroke="#26260c" stroke-width="1.25"/><rect x="391.9" y="231.4" width="2.5" height="3.3" rx="0.8" fill="none" stroke="#26260c" stroke-width="1.25"/><rect x="391.9" y="236.4" width="2.5" height="3.3" rx="0.8" fill="none" stroke="#26260c" stroke-width="1.25"/><rect x="395.8" y="231.4" width="2.5" height="3.3" rx="0.8" fill="none" stroke="#26260c" stroke-width="1.25"/><rect x="395.8" y="236.4" width="2.5" height="3.3" rx="0.8" fill="none" stroke="#26260c" stroke-width="1.25"/></svg>
<span class="t" style="left:271.4px;top:159.8px;font-family:'Liberation Serif','Noto Serif CJK SC',serif;font-size:19.4px;line-height:30px;font-weight:500;letter-spacing:2.8px;color:#7c2029;-webkit-text-stroke:0.65px #c63c4a;text-shadow:0 0 1px #000,0 0 1.6px #000,0 0 2.2px #000;"><b style="font-weight:inherit;letter-spacing:5.0px">2</b>单击画线工具</span>
<span class="t" style="left:333.2px;top:449px;font-family:'Liberation Serif','Noto Serif CJK SC',serif;font-size:19.4px;line-height:30px;font-weight:500;letter-spacing:3.35px;color:#7c2029;-webkit-text-stroke:0.65px #c63c4a;text-shadow:0 0 1px #000,0 0 1.6px #000,0 0 2.2px #000;"><b style="font-weight:inherit;letter-spacing:1.8px">1</b>切换到禁止布线层</span>
<svg style="left:0;top:0" width="640" height="543" viewBox="0 0 640 543"><path d="M169.2 137.8 L175.3 147.2 L175.4 144.5 L194.0 152.9 L194.4 152.3 L178.1 140.0 L180.4 138.6 Z" fill="#e5343f"/><path d="M276.6 215.6 L288.0 209.1 L285.0 208.4 L301.3 182.2 L300.7 181.8 L280.8 205.3 L279.3 202.7 Z" fill="#e5343f"/><path d="M139.4 435.8 L150.0 441.3 L148.8 438.2 L190.0 435.0 L190.0 434.2 L148.6 433.0 L149.8 429.8 Z" fill="#e5343f"/><path d="M382.8 501.0 L394.0 493.8 L390.8 493.2 L400.7 472.6 L400.1 472.2 L386.2 490.4 L384.1 487.7 Z" fill="#e5343f"/></svg>
<span class="t" style="left:476.4px;top:509.2px;font-family:'Liberation Sans','Noto Sans CJK SC',sans-serif;font-size:15.6px;font-weight:300;line-height:24px;color:#fdfdfd;letter-spacing:0.25px;text-shadow:0.8px 0.8px 0.5px #1a1a1a,-0.6px -0.6px 0.5px #2a2a2a,0.8px -0.6px 0.5px #2a2a2a,-0.6px 0.8px 0.5px #2a2a2a,0 0 1.5px #000;">头条 @电子教育中心</span>
<svg style="left:622.4px;top:524.8px" width="11" height="13" viewBox="0 0 11 13"><path d="M1 0.8 H9.6 V9.2 H6.4 L7.4 12 L4 9.2 H1 Z" fill="#f6f6f0" stroke="#222" stroke-width="1"/><text x="3" y="8" font-family="Liberation Sans,sans-serif" font-weight="bold" font-size="7.6" fill="#111">?</text></svg>
</div></body></html>
